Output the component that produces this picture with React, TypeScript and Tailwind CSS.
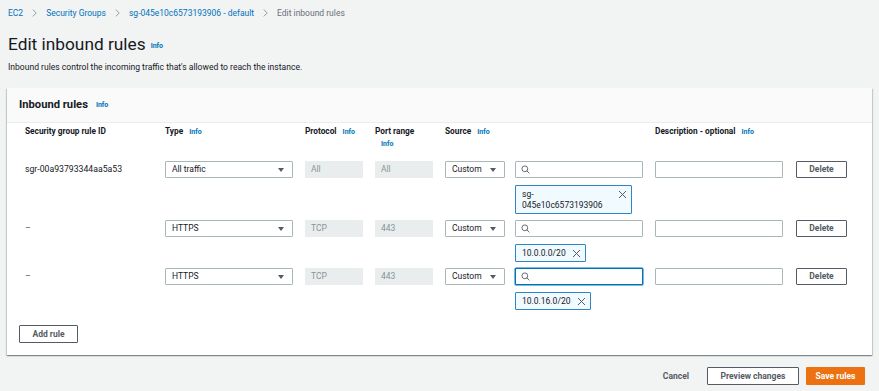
import React from "react";

const Info = ({ className = "" }: { className?: string }) => (
  <span className={`text-[7px] font-bold text-[#0073bb] ${className}`}>Info</span>
);

const Chevron = () => (
  <svg width="5" height="8" viewBox="0 0 5 8" className="shrink-0">
    <path d="M0.8 0.6 L4.2 4 L0.8 7.4" fill="none" stroke="#879596" strokeWidth="0.9" />
  </svg>
);

const Caret = () => (
  <svg width="6" height="4" viewBox="0 0 6 4" className="shrink-0">
    <path d="M0 0 H6 L3 4 Z" fill="#545b64" />
  </svg>
);

const SearchIcon = () => (
  <svg width="9" height="9" viewBox="0 0 9 9" className="shrink-0">
    <circle cx="3.8" cy="3.8" r="2.9" fill="none" stroke="#545b64" strokeWidth="0.9" />
    <path d="M5.9 5.9 L8.4 8.4" stroke="#545b64" strokeWidth="0.9" />
  </svg>
);

const XIcon = () => (
  <svg width="9" height="9" viewBox="0 0 9 9" className="shrink-0">
    <path d="M1 1 L8 8 M8 1 L1 8" stroke="#545b64" strokeWidth="1" />
  </svg>
);

const Select = ({ value, w }: { value: string; w: string }) => (
  <div
    className={`${w} h-[17px] border border-[#aab7b8] rounded-[1px] bg-white flex items-center justify-between pl-[6px] pr-[8px] text-[8.5px] text-[#16191f]`}
  >
    <span>{value}</span>
    <Caret />
  </div>
);

const ReadOnly = ({ value }: { value: string }) => (
  <div className="h-[17px] bg-[#eaeded] flex items-center pl-[6px] text-[8.5px] text-[#879596]">{value}</div>
);

const Token = ({ lines, w }: { lines: string[]; w: string }) => (
  <div
    className={`${w} mt-[7px] bg-[#f1faff] border border-[#3184c2] rounded-[1px] flex items-start justify-between pl-[6px] pr-[4px] py-[2.5px] text-[8.5px] leading-[11px] text-[#16191f]`}
  >
    <div>
      {lines.map((l) => (
        <div key={l}>{l}</div>
      ))}
    </div>
    <div className="mt-[1px]">
      <XIcon />
    </div>
  </div>
);

const Button = ({ label, w, h }: { label: string; w: string; h: string }) => (
  <div
    className={`${w} ${h} border border-[#545b64] rounded-[1px] bg-white flex items-center justify-center text-[8.5px] font-bold text-[#545b64]`}
  >
    {label}
  </div>
);

type Rule = {
  id: string;
  type: string;
  protocol: string;
  port: string;
  token: string[];
  tokenW: string;
  focused?: boolean;
};

const rules: Rule[] = [
  { id: "sgr-00a93793344aa5a53", type: "All traffic", protocol: "All", port: "All", token: ["sg-", "045e10c6573193906"], tokenW: "w-[117px]" },
  { id: "–", type: "HTTPS", protocol: "TCP", port: "443", token: ["10.0.0.0/20"], tokenW: "w-[71px]" },
  { id: "–", type: "HTTPS", protocol: "TCP", port: "443", token: ["10.0.16.0/20"], tokenW: "w-[76px]", focused: true },
];

const grid = "grid grid-cols-[128px_128px_58px_58px_58px_128px_128px_51px] gap-x-[12px]";

export default function App() {
  return (
    <div className="w-[879px] h-[391px] overflow-hidden bg-[#f2f3f3] px-[7px] font-['Roboto','Liberation_Sans',sans-serif] text-[#16191f]">
      {/* Breadcrumb */}
      <div className="pt-[7px] h-[19px] flex items-center gap-[9px] pl-[1px] text-[8.5px] leading-[12px]">
        <span className="text-[#0073bb]">EC2</span>
        <Chevron />
        <span className="text-[#0073bb]">Security Groups</span>
        <Chevron />
        <span className="text-[#0073bb]">sg-045e10c6573193906 - default</span>
        <Chevron />
        <span className="text-[#687078]">Edit inbound rules</span>
      </div>

      {/* Title */}
      <div className="mt-[13px] h-[24px] flex items-center pl-[1px]">
        <h1 className="text-[17.3px] leading-[24px] text-[#16191f]">Edit inbound rules</h1>
        <Info className="ml-[5px] mt-[4px]" />
      </div>
      <div className="mt-[5px] h-[12px] pl-[1px] text-[8.55px] leading-[12px] text-[#16191f]">
        Inbound rules control the incoming traffic that's allowed to reach the instance.
      </div>

      {/* Panel */}
      <div className="mt-[15px] bg-white shadow-[0_1px_1px_rgba(0,28,36,0.3),1px_1px_1px_rgba(0,28,36,0.15),-1px_1px_1px_rgba(0,28,36,0.15)]">
        <div className="h-[35px] bg-[#fafafa] border-b border-[#eaeded] flex items-center pl-[12px]">
          <span className="text-[11.2px] font-bold text-[#16191f]">Inbound rules</span>
          <Info className="ml-[8px] mt-[1px]" />
        </div>

        <div className="pl-[18px] pt-[2px] pb-[12px]">
          {/* Column headers */}
          <div className={`${grid} text-[8.3px] leading-[12px] font-bold text-[#16191f]`}>
            <div className="whitespace-nowrap">Security group rule ID</div>
            <div>
              Type <Info className="ml-[4px]" />
            </div>
            <div className="whitespace-nowrap">
              Protocol <Info className="ml-[4px]" />
            </div>
            <div>
              <div className="whitespace-nowrap">Port range</div>
              <Info className="ml-[6px]" />
            </div>
            <div className="whitespace-nowrap">
              Source <Info className="ml-[4px]" />
            </div>
            <div />
            <div className="col-span-2 whitespace-nowrap">
              Description - optional <Info className="ml-[4px]" />
            </div>
          </div>

          {/* Rows */}
          <div className="mt-[11px] flex flex-col gap-[6px]">
            {rules.map((r, i) => (
              <div key={i} className={`${grid} items-start`}>
                <div className="h-[17px] flex items-center text-[8.7px] text-[#16191f]">
                  <span className={r.id === "–" ? "text-[#545b64]" : ""}>{r.id}</span>
                </div>
                <Select value={r.type} w="w-[128px]" />
                <ReadOnly value={r.protocol} />
                <ReadOnly value={r.port} />
                <Select value="Custom" w="w-[60px]" />
                <div className="w-[128px]">
                  <div
                    className={`h-[17px] rounded-[1px] bg-white flex items-center pl-[5px] ${
                      r.focused ? "border border-[#0073bb] shadow-[0_0_0_0.5px_#0073bb]" : "border border-[#aab7b8]"
                    }`}
                  >
                    <SearchIcon />
                  </div>
                  <Token lines={r.token} w={r.tokenW} />
                </div>
                <div className="h-[17px] border border-[#aab7b8] rounded-[1px] bg-white" />
                <div className="ml-[1px]">
                  <Button label="Delete" w="w-[51px]" h="h-[17px]" />
                </div>
              </div>
            ))}
          </div>

          <div className="mt-[15px] -ml-[6px]">
            <Button label="Add rule" w="w-[59px]" h="h-[18px]" />
          </div>
        </div>
      </div>

      {/* Footer */}
      <div className="mt-[12px] flex items-center justify-end pr-[7px]">
        <span className="text-[8.5px] font-bold text-[#545b64] mr-[18px]">Cancel</span>
        <div className="w-[92px] h-[18px] border border-[#545b64] rounded-[1px] bg-white flex items-center justify-center text-[8.5px] font-bold text-[#545b64]">
          Preview changes
        </div>
        <div className="ml-[7px] w-[59px] h-[18px] rounded-[1px] bg-[#ec7211] flex items-center justify-center text-[8.5px] font-bold text-white">
          Save rules
        </div>
      </div>
    </div>
  );
}
